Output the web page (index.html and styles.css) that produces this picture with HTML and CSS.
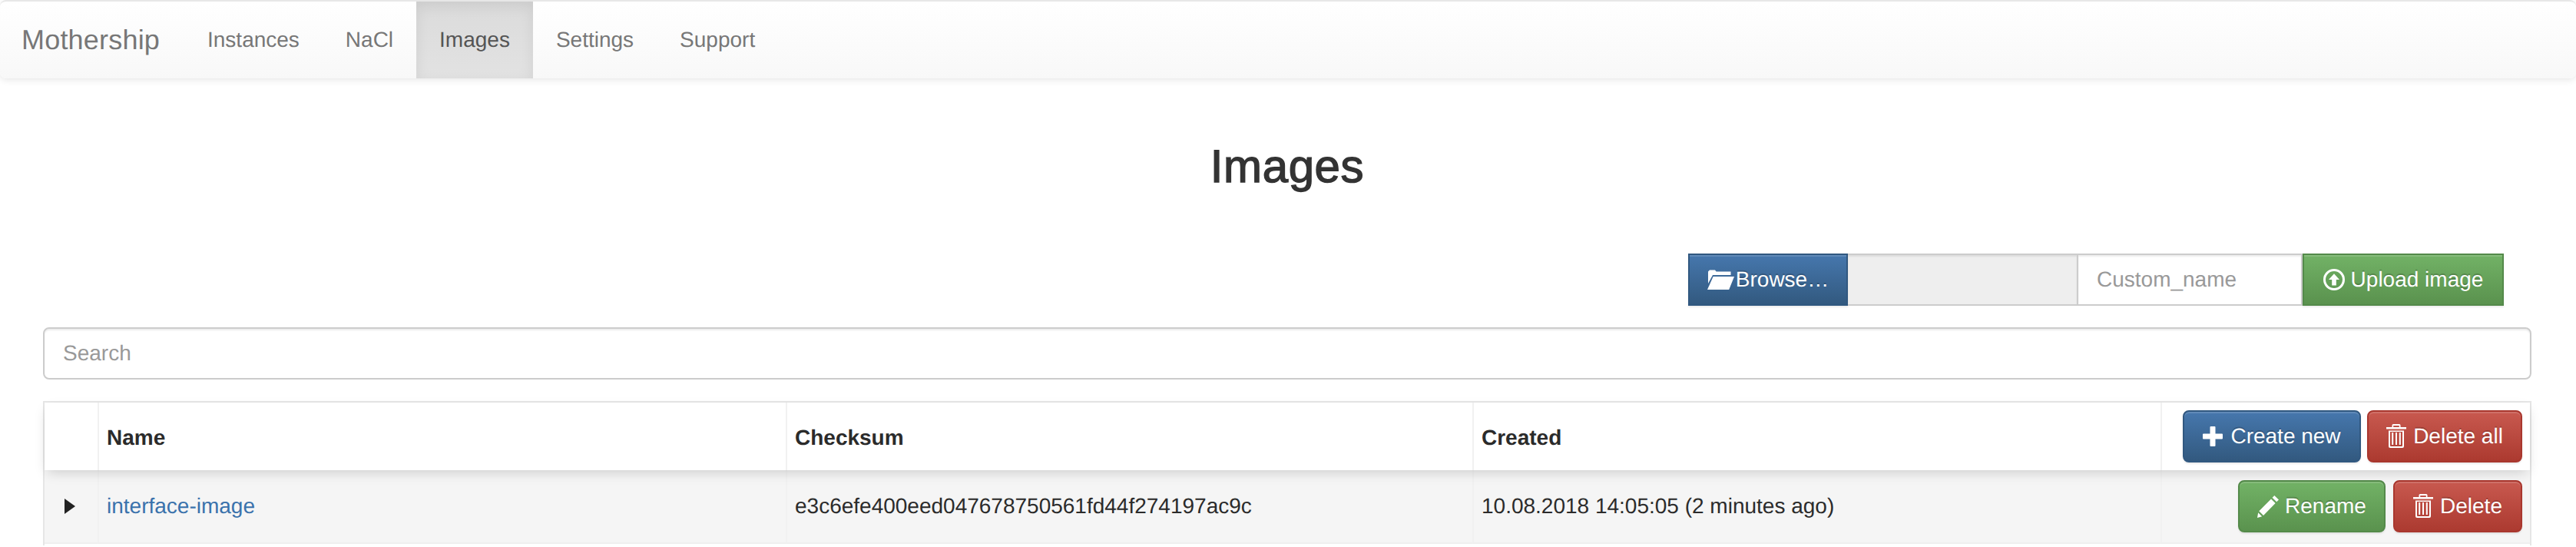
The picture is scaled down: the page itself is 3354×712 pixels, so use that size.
FILE: index.html
```html
<!DOCTYPE html>
<html lang="en">
<head>
<meta charset="utf-8">
<title>Mothership</title>
<link rel="stylesheet" href="styles.css">
</head>
<body>
<svg class="defs" width="0" height="0" aria-hidden="true">
  <symbol id="i-folder" viewBox="0 0 35 26">
    <path d="M1 2.6 3 .6h7l1.6 2H30.5V7H7L1 18z"/>
    <path d="M7.6 9H35l-6.8 17H0z"/>
  </symbol>
  <symbol id="i-upload" viewBox="0 0 28 28">
    <path fill-rule="evenodd" d="M14 0a14 14 0 1 1 0 28a14 14 0 0 1 0-28zm0 3a11 11 0 1 0 0 22a11 11 0 0 0 0-22z"/>
    <path d="M14 6.2 21 14h-4.2v7.4h-5.6V14H7z"/>
  </symbol>
  <symbol id="i-plus" viewBox="0 0 26 26">
    <path d="M9.5 1a1 1 0 0 1 1-1h5a1 1 0 0 1 1 1v8.500h8.500a1 1 0 0 1 1 1v5a1 1 0 0 1-1 1h-8.500V25a1 1 0 0 1-1 1h-5a1 1 0 0 1-1-1v-8.500H1a1 1 0 0 1-1-1v-5a1 1 0 0 1 1-1h8.500z"/>
  </symbol>
  <symbol id="i-trash" viewBox="0 0 26 31">
    <path fill-rule="evenodd" d="M9 0h8a1.500 1.500 0 0 1 1.500 1.500V4H26v2.500H0V4h7.500V1.500A1.500 1.500 0 0 1 9 0zm.2 2v2h7.600V2z"/>
    <path fill-rule="evenodd" d="M3 8.500h20V29a2 2 0 0 1-2 2H5a2 2 0 0 1-2-2zm2 1.500v18a1 1 0 0 0 1 1h14a1 1 0 0 0 1-1V10z"/>
    <path d="M7.200 11h2v16h-2zM12 11h2v16h-2zM16.800 11h2v16h-2z"/>
  </symbol>
  <symbol id="i-pencil" viewBox="0 0 28 29">
    <path d="M22.300 0 28 5.500l-2.800 2.800-5.600-5.500zM18 4.500l5.600 5.500L8 26 2.300 20.300zM1.200 22.300l5 4.900L0 29z"/>
  </symbol>
  <symbol id="i-caret" viewBox="0 0 14 20">
    <path d="M0 0 14 10 0 20z"/>
  </symbol>
</svg>

<nav class="navbar">
  <a class="brand" href="#">Mothership</a>
  <ul class="nav">
    <li><a href="#">Instances</a></li>
    <li><a href="#">NaCl</a></li>
    <li class="active"><a href="#">Images</a></li>
    <li><a href="#">Settings</a></li>
    <li><a href="#">Support</a></li>
  </ul>
</nav>

<main class="page">
  <h1 class="title">Images</h1>

  <form class="upload">
    <button type="button" class="btn btn-primary btn-square btn-browse"><svg class="ico ico-folder"><use href="#i-folder"/></svg>Browse…</button>
    <input class="field field-file" type="text" readonly>
    <input class="field field-name" type="text" placeholder="Custom_name">
    <button type="button" class="btn btn-success btn-square btn-upload"><svg class="ico ico-upload"><use href="#i-upload"/></svg>Upload image</button>
  </form>

  <input class="search" type="text" placeholder="Search">

  <table class="grid">
    <thead>
      <tr>
        <th class="c-toggle"></th>
        <th class="c-name">Name</th>
        <th class="c-sum">Checksum</th>
        <th class="c-date">Created</th>
        <th class="c-act">
          <div class="actions actions-head">
            <button type="button" class="btn btn-primary btn-create"><svg class="ico ico-plus"><use href="#i-plus"/></svg>Create new</button>
            <button type="button" class="btn btn-danger btn-delall"><svg class="ico ico-trash"><use href="#i-trash"/></svg>Delete all</button>
          </div>
        </th>
      </tr>
    </thead>
    <tbody>
      <tr class="row">
        <td class="c-toggle"><svg class="caret"><use href="#i-caret"/></svg></td>
        <td><a class="link" href="#">interface-image</a></td>
        <td>e3c6efe400eed047678750561fd44f274197ac9c</td>
        <td>10.08.2018 14:05:05 (2 minutes ago)</td>
        <td>
          <div class="actions">
            <button type="button" class="btn btn-success btn-rename"><svg class="ico ico-pencil"><use href="#i-pencil"/></svg>Rename</button>
            <button type="button" class="btn btn-danger btn-del"><svg class="ico ico-trash"><use href="#i-trash"/></svg>Delete</button>
          </div>
        </td>
      </tr>
      <tr class="row-detail"><td colspan="5"></td></tr>
    </tbody>
  </table>
</main>
</body>
</html>
```
FILE: styles.css
```css
* { box-sizing: border-box; }
html, body { margin: 0; height: 712px; overflow: hidden; background: #fff; }
body {
  font-family: "Liberation Sans", Arial, sans-serif;
  font-size: 28px;
  line-height: 40px;
  color: #2b2b2b;
  text-rendering: geometricPrecision;
}
.defs { position: absolute; }
a { text-decoration: none; }

/* Navbar */
.navbar {
  display: flex;
  height: 102px;
  border-top: 2px solid #e7e7e7;
  border-radius: 8px;
  background: linear-gradient(#fff, #f8f8f8);
  box-shadow: 0 2px 10px rgba(0, 0, 0, .1);
}
.brand {
  width: 240px;
  padding: 30px 0 30px 28px;
  font-size: 36px;
  line-height: 40px;
  letter-spacing: .2px;
  color: #777;
}
.nav { display: flex; margin: 0; padding: 0; list-style: none; }
.nav a {
  display: block;
  height: 100px;
  padding: 30px;
  color: #777;
}
.nav .active a {
  color: #555;
  background: linear-gradient(#dbdbdb, #e2e2e2);
  box-shadow: inset 0 6px 18px rgba(0, 0, 0, .075);
}

/* Page */
.page { padding: 0 58px 0 56px; }
.title {
  margin: 82px 0 80px;
  font-size: 60px;
  line-height: 66px;
  font-weight: 400;
  text-align: center;
  color: #333;
  letter-spacing: .6px;
  -webkit-text-stroke: 1.400px #333;
}

/* Buttons */
.btn {
  display: inline-flex;
  align-items: center;
  justify-content: center;
  height: 68px;
  padding: 0;
  border: 2px solid;
  border-radius: 8px;
  font: 400 28px/40px "Liberation Sans", Arial, sans-serif;
  text-rendering: geometricPrecision;
  color: #fff;
  white-space: nowrap;
  text-shadow: 0 -2px 0 rgba(0, 0, 0, .2);
}
.btn-primary {
  border-color: #315880;
  background: linear-gradient(#4677ad, #32597f);
  box-shadow: inset 0 2px 0 rgba(255, 255, 255, .15), 0 2px 2px rgba(0, 0, 0, .075);
}
.btn-success {
  border-color: #548a4a;
  background: linear-gradient(#72b266, #5a924e);
  box-shadow: inset 0 2px 0 rgba(255, 255, 255, .15), 0 2px 2px rgba(0, 0, 0, .075);
}
.btn-danger {
  border-color: #a9372e;
  background: linear-gradient(#c8594f, #ac3a30);
  box-shadow: inset 0 2px 0 rgba(255, 255, 255, .15), 0 2px 2px rgba(0, 0, 0, .075);
}
.btn-square { border-radius: 0; }
.btn-browse { width: 208px; }
.btn-upload { width: 262px; }
.btn-create { width: 232px; }
.btn-delall { width: 202px; }
.btn-rename { width: 192px; }
.btn-del { width: 168px; }

.ico { display: block; flex: none; fill: currentColor; }
.ico-folder { width: 35px; height: 26px; margin-right: 2px; }
.ico-upload { width: 28px; height: 28px; margin-right: 8px; }
.ico-plus { width: 26px; height: 26px; margin-right: 10px; }
.ico-trash { width: 26px; height: 31px; margin-right: 9px; margin-top: -2px; }
.ico-pencil { width: 28px; height: 29px; margin-right: 8px; }

/* Upload row */
.upload { display: flex; justify-content: flex-end; padding-right: 36px; }
.field {
  height: 68px;
  padding: 0 24px;
  border: 2px solid #ccc;
  font: inherit;
  color: #555;
  background: #fff;
  outline: 0;
  text-rendering: geometricPrecision;
  box-shadow: inset 0 2px 2px rgba(0, 0, 0, .075);
}
.field-file { width: 300px; background: #eee; border-left-width: 0; }
.field-name { width: 292px; border-left: 0; }
.field::placeholder, .search::placeholder { color: #999; opacity: 1; }

/* Search */
.search {
  display: block;
  width: 100%;
  height: 68px;
  margin: 28px 0;
  padding: 0 24px;
  border: 2px solid #ccc;
  border-radius: 8px;
  font: inherit;
  color: #555;
  outline: 0;
  text-rendering: geometricPrecision;
  box-shadow: inset 0 2px 2px rgba(0, 0, 0, .075);
}

/* Table */
.grid {
  width: 3240px;
  table-layout: fixed;
  border-collapse: separate;
  border-spacing: 0;
  border: 2px solid #e6e6e6;
  border-bottom: 0;
}
.grid th, .grid td {
  padding: 0 10px;
  border-left: 2px solid #f1f1f1;
  text-align: left;
  vertical-align: middle;
}
.grid th:first-child, .grid td:first-child { border-left: 0; }
.grid thead tr { height: 88px; }
.grid th { padding-top: 4px; font-weight: 700; }
.grid th.c-act { padding-top: 0; }
.grid thead { position: relative; z-index: 1; box-shadow: 0 6px 16px -4px rgba(0, 0, 0, .18); background: #fff; }
.c-toggle { width: 69px; }
.c-name { width: 896px; }
.c-sum { width: 894px; }
.c-date { width: 896px; }
.c-act { width: 481px; }
.row { height: 96px; background: #f5f5f5; }
.row td { border-bottom: 2px solid #efefef; }
.row-detail { background: #fff; }
.grid .row-detail td { height: 2px; padding: 0; border-left: 0; font-size: 0; line-height: 0; }
.grid .c-toggle { padding: 0 0 0 26px; }
.caret { display: block; width: 14px; height: 20px; fill: #222; }
.link { color: #3a72ac; }
.actions { display: flex; justify-content: flex-end; gap: 10px; }
.actions-head { gap: 8px; }
```
